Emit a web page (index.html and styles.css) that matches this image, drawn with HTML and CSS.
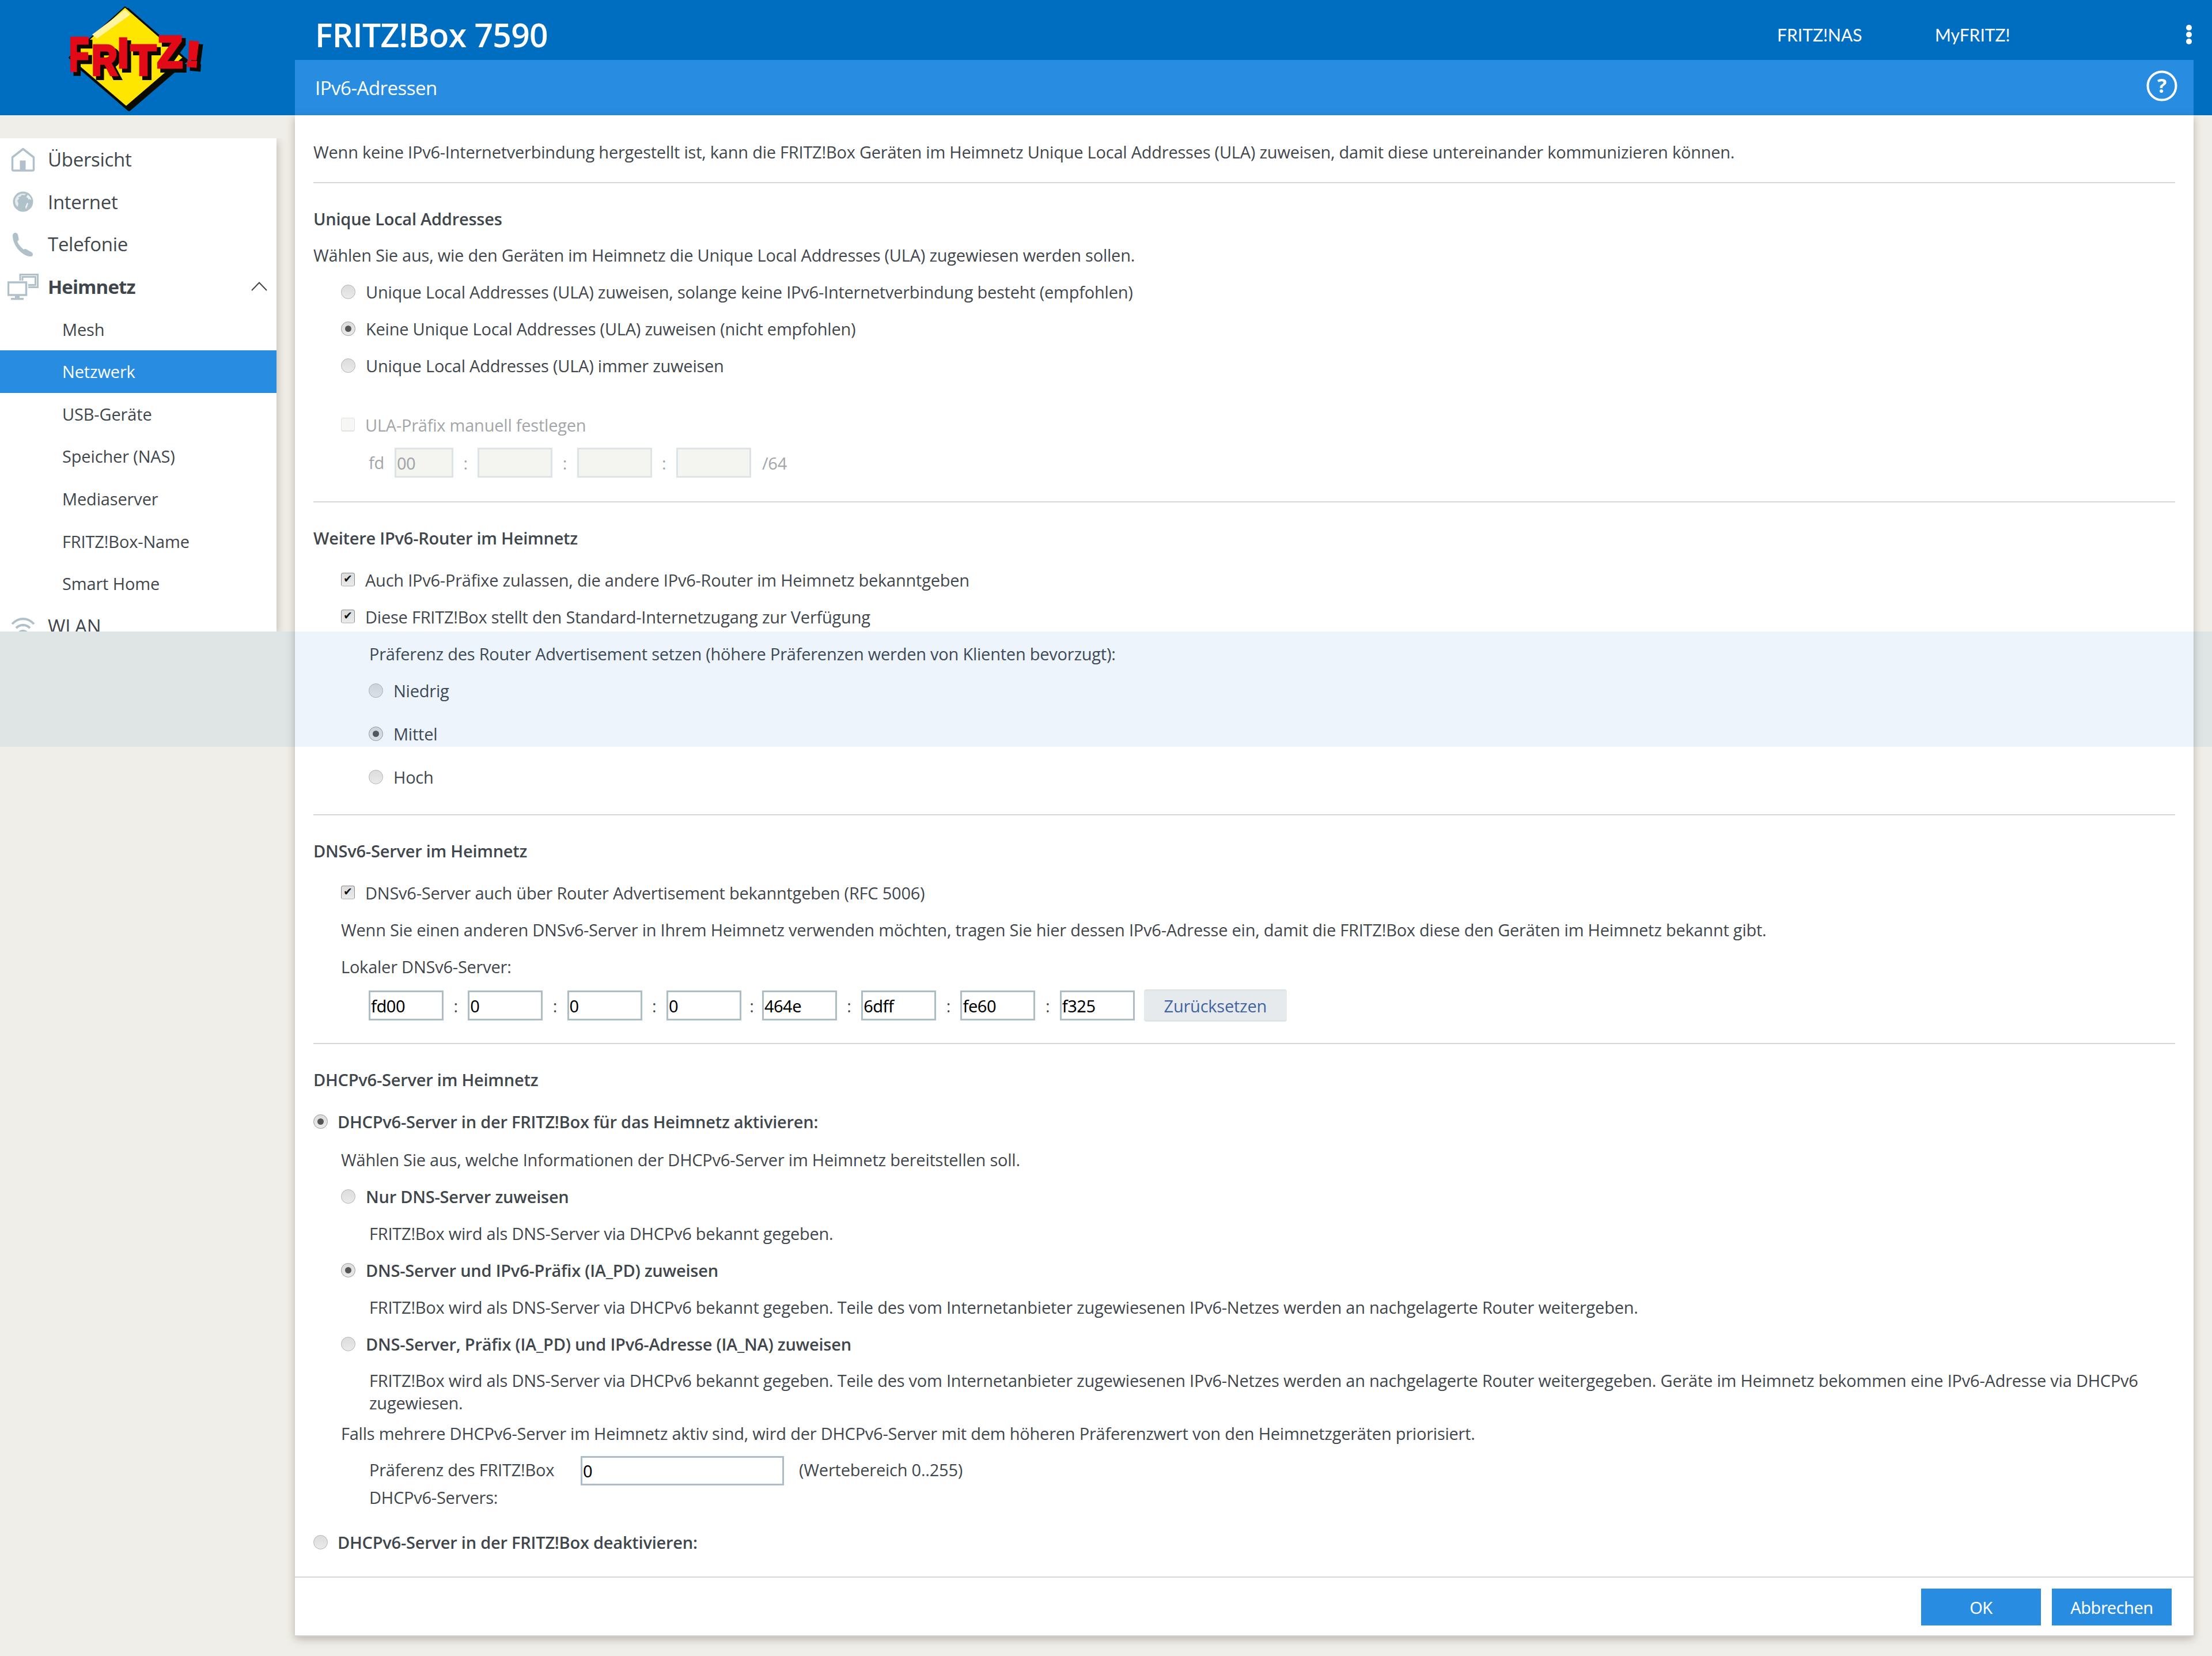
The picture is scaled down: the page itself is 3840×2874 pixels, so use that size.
FILE: index.html
```html
<!DOCTYPE html>
<html lang="de">
<head>
<meta charset="utf-8">
<title>FRITZ!Box 7590 - IPv6-Adressen</title>
<link rel="stylesheet" href="styles.css">
</head>
<body>
<div class="page">
  <header class="top">
    <div class="logo-col">
      <svg class="logo" viewBox="0 0 320 200" width="320" height="200">
        <polygon class="logo-shadow" points="162,17 263,105 164,190 65,105"/>
        <polygon class="logo-diamond" points="157,12 258,100 159,185 60,100"/>
        <polygon class="logo-shine" points="157,17 167,25 108,67 100,60"/>
        <g class="logo-back">
          <text transform="translate(66,129) scale(.56,.82)">F</text>
          <text transform="translate(105,136) scale(.62,.74)">R</text>
          <text transform="translate(150,123) scale(.7,.73)">I</text>
          <text transform="translate(173,136) scale(.72,.75)">T</text>
          <text transform="translate(219,123) scale(.72,.77)">Z</text>
          <text transform="translate(265,120) rotate(5) scale(.85,.62)">!</text>
        </g>
        <g class="logo-front">
          <text transform="translate(60,123) scale(.56,.82)">F</text>
          <text transform="translate(99,130) scale(.62,.74)">R</text>
          <text transform="translate(144,117) scale(.7,.73)">I</text>
          <text transform="translate(167,130) scale(.72,.75)">T</text>
          <text transform="translate(213,117) scale(.72,.77)">Z</text>
          <text transform="translate(259,114) rotate(5) scale(.85,.62)">!</text>
        </g>
      </svg>
    </div>
    <div class="top-main">
      <div class="title-row">
        <div class="title">FRITZ!Box 7590</div>
        <nav class="top-nav">
          <a class="nas">FRITZ!NAS</a>
          <a class="myf">MyFRITZ!</a>
        </nav>
        <div class="dots"><i></i><i></i><i></i></div>
      </div>
      <div class="subbar">
        <div class="subtitle">IPv6-Adressen</div>
        <svg class="help" viewBox="0 0 54 54" width="54" height="54">
          <circle cx="27" cy="27" r="24.5" fill="none" stroke="#fff" stroke-width="4"/>
          <text x="27" y="39" text-anchor="middle">?</text>
        </svg>
      </div>
    </div>
  </header>

  <div class="body">
    <div class="side-col">
      <aside class="sidebar">
        <a class="item"><span class="ico"><svg viewBox="0 0 42 42" width="42" height="42"><path d="M21 2.5 39.5 17V38a2 2 0 0 1-2 2H4.500a2 2 0 0 1-2-2V17Z" fill="none" stroke="#b1c1c9" stroke-width="3.500" stroke-linejoin="round"/><rect x="15.500" y="22.500" width="10" height="17" fill="#b1c1c9"/></svg></span>Übersicht</a>
        <a class="item"><span class="ico"><svg viewBox="0 0 36 36" width="36" height="36"><circle cx="18" cy="18" r="17.500" fill="#b1c1c9"/><path d="M4 18c0-8 6-14 14-14 2 0 4 .4 5 1l-3 2-4-1-2 3-4 1 1 3-3 3 2 5-1 6C6 25 4 22 4 18Z" fill="#e4ebee"/><path d="M26 6c3.500 2 5.500 5 6.500 9l-3-1.500-2 1-1-3-3-1Z" fill="#eef2f4"/><path d="M25 20l2 1-2 6-2 4-1-4Z" fill="#eef2f4"/></svg></span>Internet</a>
        <a class="item"><span class="ico"><svg viewBox="0 0 40 42" width="40" height="42"><path d="M2 6c0-3 2-5 5-5 2 0 4 2 4.500 5l1 6c.2 2-1 3-2.500 4 2 5 6 10 11 14 1.500-1 3-1.500 4.500-.5l9 5c3 2 3 4 2 6s-3 2-6 1.500C16 39 2 22 2 6Z" fill="#b1c1c9"/></svg></span>Telefonie</a>
        <a class="item active-parent"><span class="ico"><svg viewBox="0 0 54 46" width="54" height="46"><path d="M22 12V1.500h30.500v22H36M36 19.500h12.500V5.500H26V12" fill="none" stroke="#b1c1c9" stroke-width="3"/><rect x="1.500" y="15" width="31" height="22" fill="none" stroke="#b1c1c9" stroke-width="3.500"/><rect x="13" y="37" width="8" height="5" fill="#b1c1c9"/><rect x="6" y="42" width="22" height="3.500" fill="#b1c1c9"/><path d="M36 19h12v5H36Z" fill="#b1c1c9" opacity=".35"/></svg></span>Heimnetz<svg class="chev" viewBox="0 0 28 16" width="28" height="16"><path d="M1 15 14 1.500 27 15" fill="none" stroke="#3f464c" stroke-width="2"/></svg></a>
        <a class="sub">Mesh</a>
        <a class="sub sel">Netzwerk</a>
        <a class="sub">USB-Geräte</a>
        <a class="sub">Speicher (NAS)</a>
        <a class="sub">Mediaserver</a>
        <a class="sub">FRITZ!Box-Name</a>
        <a class="sub">Smart Home</a>
        <a class="item"><span class="ico"><svg viewBox="0 0 42 34" width="42" height="34"><path d="M2 14C13 2 29 2 40 14M9 21c7-7 17-7 24 0M15 28c3.500-3 8.500-3 12 0" fill="none" stroke="#b1c1c9" stroke-width="4"/></svg></span>WLAN</a>
      </aside>
    </div>

    <main class="panel">
      <div class="content">
        <div class="row">Wenn keine IPv6-Internetverbindung hergestellt ist, kann die FRITZ!Box Geräten im Heimnetz Unique Local Addresses (ULA) zuweisen, damit diese untereinander kommunizieren können.</div>
        <hr class="rule rule-first">

        <h2 class="head head-first">Unique Local Addresses</h2>
        <div class="row">Wählen Sie aus, wie den Geräten im Heimnetz die Unique Local Addresses (ULA) zugewiesen werden sollen.</div>
        <label class="row ind"><input type="radio" name="ula">Unique Local Addresses (ULA) zuweisen, solange keine IPv6-Internetverbindung besteht (empfohlen)</label>
        <label class="row ind"><input type="radio" name="ula" checked>Keine Unique Local Addresses (ULA) zuweisen (nicht empfohlen)</label>
        <label class="row ind"><input type="radio" name="ula">Unique Local Addresses (ULA) immer zuweisen</label>
        <label class="row ind off ula-check"><input type="checkbox" disabled>ULA-Präfix manuell festlegen</label>
        <div class="fields off-fields">
          <span class="fd">fd</span>
          <input class="short" type="text" value="00" disabled>
          <span class="sep">:</span>
          <input type="text" disabled>
          <span class="sep">:</span>
          <input type="text" disabled>
          <span class="sep">:</span>
          <input type="text" disabled>
          <span class="suffix">/64</span>
        </div>
        <hr class="rule">

        <h2 class="head loose">Weitere IPv6-Router im Heimnetz</h2>
        <label class="row ind"><input type="checkbox" checked>Auch IPv6-Präfixe zulassen, die andere IPv6-Router im Heimnetz bekanntgeben</label>
        <label class="row ind"><input type="checkbox" checked>Diese FRITZ!Box stellt den Standard-Internetzugang zur Verfügung</label>
        <div class="row text2">Präferenz des Router Advertisement setzen (höhere Präferenzen werden von Klienten bevorzugt):</div>
        <label class="row ind2"><input type="radio" name="pref">Niedrig</label>
        <label class="row ind2 spaced"><input type="radio" name="pref" checked>Mittel</label>
        <label class="row ind2 spaced"><input type="radio" name="pref">Hoch</label>
        <hr class="rule rule-tight">

        <h2 class="head loose">DNSv6-Server im Heimnetz</h2>
        <label class="row ind"><input type="checkbox" checked>DNSv6-Server auch über Router Advertisement bekanntgeben (RFC 5006)</label>
        <div class="row text1">Wenn Sie einen anderen DNSv6-Server in Ihrem Heimnetz verwenden möchten, tragen Sie hier dessen IPv6-Adresse ein, damit die FRITZ!Box diese den Geräten im Heimnetz bekannt gibt.</div>
        <div class="row text1">Lokaler DNSv6-Server:</div>
        <div class="fields dns-fields">
          <input type="text" value="fd00"><span class="sep">:</span>
          <input type="text" value="0"><span class="sep">:</span>
          <input type="text" value="0"><span class="sep">:</span>
          <input type="text" value="0"><span class="sep tight">:</span>
          <input type="text" value="464e"><span class="sep">:</span>
          <input type="text" value="6dff"><span class="sep">:</span>
          <input type="text" value="fe60"><span class="sep">:</span>
          <input type="text" value="f325">
          <button class="reset" type="button">Zurücksetzen</button>
        </div>
        <hr class="rule rule-tight">

        <h2 class="head loose">DHCPv6-Server im Heimnetz</h2>
        <label class="row ind0 strong"><input type="radio" name="dhcp" checked>DHCPv6-Server in der FRITZ!Box für das Heimnetz aktivieren:</label>
        <div class="row text1 after-radio">Wählen Sie aus, welche Informationen der DHCPv6-Server im Heimnetz bereitstellen soll.</div>
        <label class="row ind strong"><input type="radio" name="mode">Nur DNS-Server zuweisen</label>
        <div class="row text2">FRITZ!Box wird als DNS-Server via DHCPv6 bekannt gegeben.</div>
        <label class="row ind strong"><input type="radio" name="mode" checked>DNS-Server und IPv6-Präfix (IA_PD) zuweisen</label>
        <div class="row text2">FRITZ!Box wird als DNS-Server via DHCPv6 bekannt gegeben. Teile des vom Internetanbieter zugewiesenen IPv6-Netzes werden an nachgelagerte Router weitergeben.</div>
        <label class="row ind strong"><input type="radio" name="mode">DNS-Server, Präfix (IA_PD) und IPv6-Adresse (IA_NA) zuweisen</label>
        <p class="para">FRITZ!Box wird als DNS-Server via DHCPv6 bekannt gegeben. Teile des vom Internetanbieter zugewiesenen IPv6-Netzes werden an nachgelagerte Router weitergegeben. Geräte im Heimnetz bekommen eine IPv6-Adresse via DHCPv6<br>zugewiesen.</p>
        <div class="row text1">Falls mehrere DHCPv6-Server im Heimnetz aktiv sind, wird der DHCPv6-Server mit dem höheren Präferenzwert von den Heimnetzgeräten priorisiert.</div>
        <div class="pref-row">
          <label class="pref-label">Präferenz des FRITZ!Box<br>DHCPv6-Servers:</label>
          <input class="pref-input" type="text" value="0">
          <span class="pref-range">(Wertebereich 0..255)</span>
        </div>
        <label class="row ind0 strong last-radio"><input type="radio" name="dhcp">DHCPv6-Server in der FRITZ!Box deaktivieren:</label>
      </div>
      <footer class="foot">
        <button class="btn" type="button">OK</button>
        <button class="btn" type="button">Abbrechen</button>
      </footer>
    </main>
  </div>
  <div class="band"></div>
</div>
</body>
</html>
```
FILE: styles.css
```css
* { box-sizing: border-box; }
html, body { margin: 0; padding: 0; }
body { font-family: "Open Sans", "Noto Sans", sans-serif; font-size: 29px; color: #3f464c; background: #f0eee8; letter-spacing: -0.23px; }
.page { position: relative; width: 3840px; height: 2874px; overflow: hidden; }

.top { display: flex; height: 200px; background: #006ec0; color: #fff; }
.logo-col { width: 512px; height: 200px; padding-left: 60px; flex: none; }
.logo { display: block; }
.logo-shadow { fill: #0a0a00; stroke: #0a0a00; stroke-width: 6; stroke-linejoin: round; }
.logo-diamond { fill: #ffe600; stroke: #0a0a00; stroke-width: 2; stroke-linejoin: round; }
.logo-shine { fill: #fff5a0; }
.logo-back text, .logo-front text { font-family: "Liberation Sans", sans-serif; font-weight: 700; font-size: 100px; letter-spacing: 0; }
.logo-back text { fill: #0a0a00; stroke: #0a0a00; stroke-width: 8; }
.logo-front text { fill: #e30a17; stroke: #e30a17; stroke-width: 6; }
.top-main { flex: 1; display: flex; flex-direction: column; min-width: 0; }
.title-row { height: 104px; display: flex; align-items: center; padding: 16px 0 0 35px; position: relative; }
.title { font-family: "Open Sans", sans-serif; font-weight: 600; font-size: 57px; letter-spacing: -0.7px; flex: 1; }
.top-nav { display: flex; font-family: "Lato", sans-serif; font-size: 30px; letter-spacing: 0; margin-right: 125px; }
.nas { width: 274px; }
.myf { width: 296px; }
.dots { width: 40px; display: flex; flex-direction: column; align-items: center; gap: 2px; margin-right: 20px; }
.dots i { width: 10px; height: 10px; border-radius: 50%; background: #fff; }
.subbar { height: 96px; margin-right: 32px; background: #288de0; display: flex; align-items: center; justify-content: space-between; padding: 0 30px 0 35px; }
.subtitle { font-size: 33px; letter-spacing: -0.5px; }
.help { margin: -6px -2px 0 0; }
.help text { fill: #fff; font-family: "Open Sans", sans-serif; font-weight: 700; font-size: 34px; letter-spacing: 0; }

.body { display: flex; height: 2640px; align-items: flex-start; }
.side-col { width: 512px; flex: none; padding-top: 40px; }
.sidebar { width: 480px; height: 856px; background: #fff; overflow: hidden; box-shadow: 2px 4px 14px rgba(70,65,50,.28); clip-path: inset(0 -30px 0 0); }
.item, .sub { display: flex; align-items: center; height: 73.600px; }
.item { font-size: 33px; letter-spacing: -0.3px; position: relative; }
.ico { width: 80px; margin-right: 3px; display: flex; justify-content: center; align-items: center; }
.ico svg { display: block; }
.active-parent { font-weight: 700; letter-spacing: -0.9px; }
.chev { position: absolute; left: 436px; top: 28px; }
.sub { padding-left: 108px; font-size: 29px; letter-spacing: -0.15px; }
.sel { background: #288de0; color: #fff; }

.panel { width: 3296px; height: 2640px; background: #fff; border-bottom: 2px solid #d4d4d4; box-shadow: 0 4px 14px rgba(70,65,50,.35); display: flex; flex-direction: column; }
.content { flex: 1; padding: 31px 32px 0; }
.row { display: flex; align-items: center; height: 64px; white-space: nowrap; }
.rule { border: 0; height: 2px; background: #d6d6d6; margin: 35px 0 29px; }
.rule-first { margin: 21px 0 29px; }
.rule-tight { margin-top: 33px; }
.head { margin: 0; height: 64px; display: flex; align-items: center; font-size: 29px; font-weight: 600; }
.head-first { margin-bottom: -1px; }
.loose { margin-bottom: 9px; }
.ind { padding-left: 48px; }
.ind2 { padding-left: 96px; }
.ind0 { padding-left: 0; }
.text1 { padding-left: 48px; }
.text2 { padding-left: 97px; }
.strong { font-weight: 600; }
.off { color: #a2a6a8; }
.ula-check { margin-top: 39px; }
.spaced { margin-top: 11px; }
.after-radio { margin-top: 2px; }

input[type=radio], input[type=checkbox] { appearance: none; -webkit-appearance: none; margin: 0 18px 0 0; width: 25px; height: 25px; flex: none; background: linear-gradient(#dcdcdc, #eaeaea); border: 1px solid #b4b4b4; position: relative; }
input[type=radio] { border-radius: 50%; }
input[type=radio]:checked { border-color: #9a9a9a; }
input[type=radio]:checked::after { content: ""; position: absolute; left: 6px; top: 6px; width: 11px; height: 11px; border-radius: 50%; background: #555; }
input[type=checkbox] { width: 24px; height: 24px; border-radius: 4px; border-color: #8e8e8e; border-bottom: 2px solid #d0d0d0; }
input[type=checkbox]:checked::after { content: "✔"; position: absolute; left: 3px; top: -3px; font: 19px/24px "DejaVu Sans", sans-serif; color: #111; letter-spacing: 0; }
input[type=checkbox]:disabled { background: #f6f6f4; border-color: #e2e4e4; }
.ind0 input { margin-right: 17px; }

.fields { display: flex; align-items: center; }
.fields input { width: 130px; height: 52px; border: 3px solid #adbdc6; background: #fff; padding: 0 0 0 1px; font-family: "Noto Sans", sans-serif; font-size: 29px; color: #000; letter-spacing: -0.5px; border-radius: 0; outline: 0; flex: none; }
.sep { width: 42.300px; text-align: center; flex: none; color: #3f464c; }
.tight { width: 36px; }
.off-fields { margin: 2px 0 0 96px; height: 64px; color: #a2a6a8; }
.off-fields .sep { color: #a2a6a8; }
.off-fields input { background: #f4f5f1; border-color: #dde3e6; color: #a2a6a8; }
.off-fields input.short { width: 102px; }
.fd { width: 45px; flex: none; margin-top: -2px; }
.suffix { margin-left: 19px; }
.dns-fields { margin: 4px 0 0 96px; height: 64px; }
.reset { margin-left: 16px; width: 248px; height: 56px; background: #e6eaed; border: 0; border-top: 3px solid #dfe4e7; border-bottom: 3px solid #dfe4e7; border-radius: 4px; color: #3e64a0; font-family: inherit; font-size: 29px; letter-spacing: -0.23px; padding: 0; flex: none; }
.para { margin: 12px 0 0; padding-left: 97px; line-height: 39px; height: 79px; white-space: nowrap; }
.pref-row { display: flex; align-items: flex-start; height: 125px; padding-left: 97px; }
.pref-label { width: 367px; line-height: 48px; margin-top: 8px; flex: none; }
.pref-input { width: 353px; height: 51px; border: 3px solid #adbdc6; padding: 0 0 0 1px; font-family: "Noto Sans", sans-serif; font-size: 29px; color: #000; margin-top: 8px; flex: none; }
.pref-range { margin: 12px 0 0 26px; }

.foot { height: 102px; border-top: 2px solid #d6d6d6; display: flex; justify-content: flex-end; gap: 19px; padding: 19px 38px 0 0; }
.btn { width: 208px; height: 64px; background: #288de0; color: #fff; border: 0; font-family: "Noto Sans", sans-serif; font-size: 29px; letter-spacing: -0.5px; padding: 0; }

.band { position: absolute; left: 0; right: 0; top: 1096px; height: 200px; background: rgba(30,110,200,.08); pointer-events: none; }
```
